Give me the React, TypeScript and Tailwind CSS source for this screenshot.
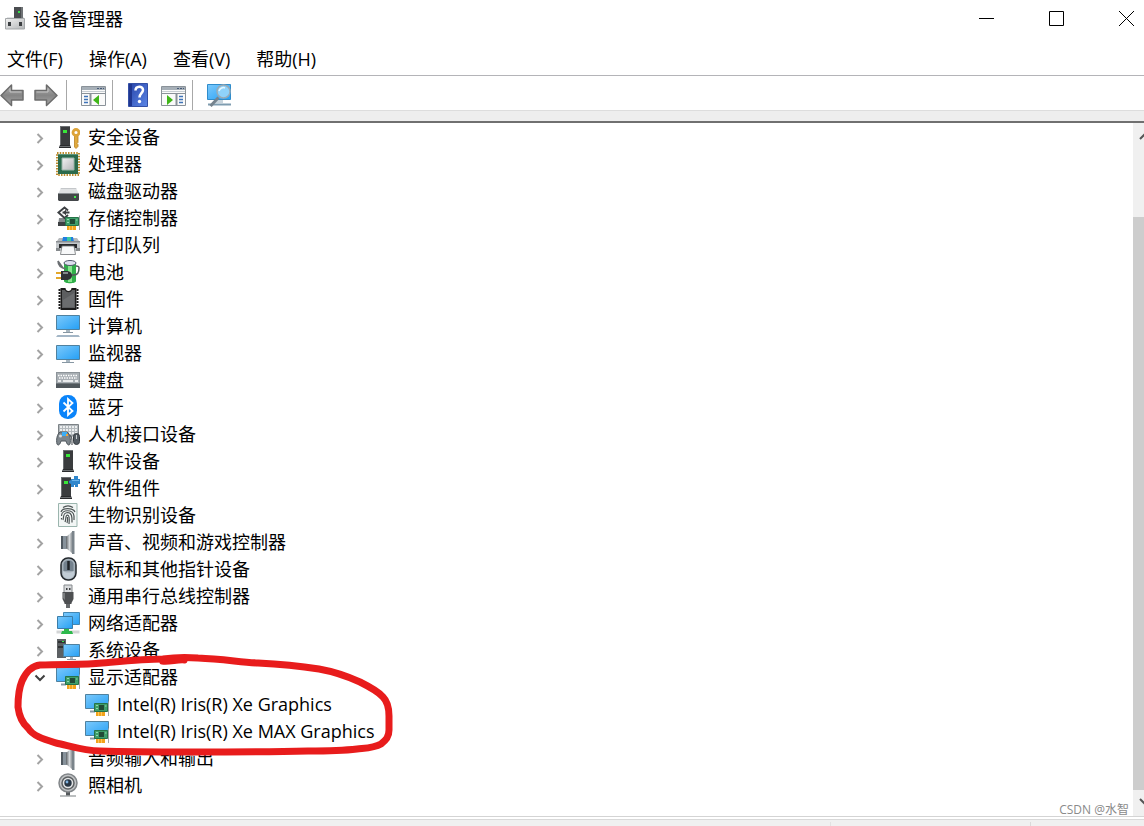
import React, { useState } from "react";

type IconName =
  | "security" | "cpu" | "disk" | "storage" | "printer" | "battery" | "firmware"
  | "computer" | "monitor" | "keyboard" | "bluetooth" | "hid" | "software"
  | "component" | "fingerprint" | "speaker" | "mouse" | "usb" | "network"
  | "system" | "display" | "camera";

type Device = { name: string; icon: IconName; children?: string[] };

const DEVICES: Device[] = [
  { name: "安全设备", icon: "security" },
  { name: "处理器", icon: "cpu" },
  { name: "磁盘驱动器", icon: "disk" },
  { name: "存储控制器", icon: "storage" },
  { name: "打印队列", icon: "printer" },
  { name: "电池", icon: "battery" },
  { name: "固件", icon: "firmware" },
  { name: "计算机", icon: "computer" },
  { name: "监视器", icon: "monitor" },
  { name: "键盘", icon: "keyboard" },
  { name: "蓝牙", icon: "bluetooth" },
  { name: "人机接口设备", icon: "hid" },
  { name: "软件设备", icon: "software" },
  { name: "软件组件", icon: "component" },
  { name: "生物识别设备", icon: "fingerprint" },
  { name: "声音、视频和游戏控制器", icon: "speaker" },
  { name: "鼠标和其他指针设备", icon: "mouse" },
  { name: "通用串行总线控制器", icon: "usb" },
  { name: "网络适配器", icon: "network" },
  { name: "系统设备", icon: "system" },
  {
    name: "显示适配器",
    icon: "display",
    children: ["Intel(R) Iris(R) Xe Graphics", "Intel(R) Iris(R) Xe MAX Graphics"],
  },
  { name: "音频输入和输出", icon: "speaker" },
  { name: "照相机", icon: "camera" },
];

const MENUS = ["文件(F)", "操作(A)", "查看(V)", "帮助(H)"];

export default function App() {
  const [open, setOpen] = useState<string[]>(["显示适配器"]);

  const toggle = (name: string) =>
    setOpen((o) => (o.includes(name) ? o.filter((n) => n !== name) : [...o, name]));

  return (
    <div className="min-h-screen flex flex-col bg-white text-black text-lg font-['Open_Sans','Noto_Sans_CJK_SC',sans-serif]">
      <Gradients />

      {/* Title bar */}
      <header className="h-[37px] flex items-center pl-1 pr-2.5">
        <TitleIcon />
        <h1 className="ml-[5px] flex-1 leading-6">设备管理器</h1>
        <div className="flex items-center gap-[55px]">
          <button aria-label="最小化">
            <svg className="block w-[15px] h-[15px]" viewBox="0 0 15 15">
              <path d="M0 7.5h15" stroke="#000" />
            </svg>
          </button>
          <button aria-label="最大化">
            <svg className="block w-[15px] h-[15px]" viewBox="0 0 15 15">
              <path d="M.5.5h14v14H.5z" fill="none" stroke="#000" />
            </svg>
          </button>
          <button aria-label="关闭">
            <svg className="block w-[15px] h-[15px]" viewBox="0 0 15 15">
              <path d="M0 0l15 15M15 0L0 15" stroke="#000" />
            </svg>
          </button>
        </div>
      </header>

      {/* Menu */}
      <nav className="h-[38px] pt-1.5 flex items-center gap-[26px] pl-[7px]">
        {MENUS.map((m) => (
          <button key={m} className="leading-6">
            {m}
          </button>
        ))}
      </nav>

      {/* Toolbar */}
      <div role="toolbar" className="h-[35px] pt-[3px] flex items-center border-t border-[#b4b4b8]">
        <div className="flex gap-2.5 pr-2">
          <button aria-label="后退"><Arrow /></button>
          <button aria-label="前进"><Arrow flip /></button>
        </div>
        <Separator />
        <div className="pl-3.5 pr-1.5">
          <button aria-label="显示/隐藏控制台树" className="block"><PanelIcon /></button>
        </div>
        <Separator />
        <div className="flex items-center gap-3 pl-3.5 pr-1.5">
          <button aria-label="帮助"><HelpIcon /></button>
          <button aria-label="显示/隐藏操作窗格"><PanelIcon right /></button>
        </div>
        <Separator />
        <div className="pl-3.5">
          <button aria-label="扫描检测硬件改动" className="block"><ScanIcon /></button>
        </div>
      </div>
      <div className="h-[13px] bg-[#eee] border-t border-t-[#ddd] border-b-2 border-b-[#707070]" />

      <main className="flex-1 flex">
        <div className="relative flex-1 pt-px pb-4">
          <ul role="tree">
            {DEVICES.map((d) => {
              const expanded = open.includes(d.name);
              return (
                <li key={d.name} role="treeitem" aria-expanded={expanded}>
                  <button
                    onClick={() => toggle(d.name)}
                    className="h-[27px] flex items-start pl-[34px] text-left"
                  >
                    <Chevron down={expanded && !!d.children} />
                    <DeviceIcon name={d.icon} />
                    <span className="ml-2 leading-[27px]">{d.name}</span>
                  </button>
                  {expanded && d.children && (
                    <ul role="group">
                      {d.children.map((c) => (
                        <li key={c} role="treeitem" className="h-[27px] flex items-start pl-[85px]">
                          <DeviceIcon name={d.icon} />
                          <span className="ml-2 leading-[26px]">{c}</span>
                        </li>
                      ))}
                    </ul>
                  )}
                </li>
              );
            })}
          </ul>

          {/* Hand-drawn highlight over the display adapters */}
          <svg
            className="absolute left-0 top-[523px] w-[400px] h-[120px] pointer-events-none"
            viewBox="0 0 400 120"
            fill="none"
            stroke="#e81c1c"
            strokeLinecap="round"
            strokeLinejoin="round"
          >
            <path
              d="M40 19C65 18 85 19 102 17C125 15 145 13 163 13C176 11 187 11 198 12C222 13 240 16 258 17C280 18 300 20 319 23C336 26 349 31 360 36C370 41 379 46 383 51C388 56 389 62 389 70V84C389 91 386 94 381 98C374 102 366 102 357 103C340 105 325 105 308 105C265 106 225 106 190 106C155 106 130 106 100 105C84 105 70 100 56 97C43 93 33 90 28 82C21 76 19 69 18 61C18 51 19 42 22 35C26 26 31 20 40 19Z"
              strokeWidth="7"
            />
            <path d="M162 16C170 17 178 14 185 15" strokeWidth="5" />
          </svg>

          <span className="absolute bottom-0 right-1 text-xs leading-3 text-[#8a8a8a]">
            CSDN @水智
          </span>
        </div>

        {/* Scrollbar */}
        <div className="w-[11px] flex flex-col bg-[#f0f0f0] overflow-hidden">
          <svg className="block h-[94px] w-4 shrink-0" viewBox="0 0 16 94">
            <path d="M7 16l5-5 4 4" fill="none" stroke="#555" strokeWidth="2" />
          </svg>
          <div className="flex-1 bg-[#cdcdcd]" />
          <svg className="block h-[26px] w-4 shrink-0" viewBox="0 0 16 26">
            <path d="M7 9l5 5 4-4" fill="none" stroke="#555" strokeWidth="2" />
          </svg>
        </div>
      </main>

      {/* Status bar */}
      <footer className="border-t border-[#d4d4d4] pt-0.5">
        <div className="h-[7px] flex justify-end bg-[#f0f0f0] border-t border-[#d9d9d9] pt-0.5">
          <div className="w-[200px] border-l border-[#e2e2e2]" />
          <div className="w-[114px] border-l border-[#dadada]" />
        </div>
      </footer>
    </div>
  );
}

function Separator() {
  return <div className="w-px h-[30px] bg-[#a8a8a8]" />;
}

function Chevron({ down }: { down: boolean }) {
  return (
    <svg className="w-[22px] h-[27px] shrink-0" viewBox="0 0 22 27" fill="none" strokeWidth="2">
      {down ? (
        <path d="M1.500 11.500l4.500 4.500 4.500-4.500" stroke="#404040" />
      ) : (
        <path d="M3.500 10l4.500 4.500-4.500 4.500" stroke="#a3a3a3" />
      )}
    </svg>
  );
}

function Gradients() {
  return (
    <svg className="absolute w-0 h-0" aria-hidden="true">
      <defs>
        <linearGradient id="screen" x1="0" y1="0" x2="1" y2="1">
          <stop offset="0" stopColor="#7cc9fb" />
          <stop offset="1" stopColor="#25a0f5" />
        </linearGradient>
        <linearGradient id="steel" x1="0" y1="0" x2="1" y2="0">
          <stop offset="0" stopColor="#5d6266" />
          <stop offset=".5" stopColor="#d5d9dc" />
          <stop offset="1" stopColor="#71777b" />
        </linearGradient>
        <linearGradient id="silver" x1="0" y1="0" x2="1" y2="1">
          <stop offset="0" stopColor="#f2f2f2" />
          <stop offset="1" stopColor="#b4b6b8" />
        </linearGradient>
        <linearGradient id="arrow" x1="0" y1="0" x2="0" y2="1">
          <stop offset="0" stopColor="#b5b5b5" />
          <stop offset=".5" stopColor="#858585" />
          <stop offset="1" stopColor="#a6a6a6" />
        </linearGradient>
        <linearGradient id="help" x1="0" y1="0" x2="1" y2="1">
          <stop offset="0" stopColor="#2743a8" />
          <stop offset="1" stopColor="#5b86e6" />
        </linearGradient>
      </defs>
    </svg>
  );
}

function TitleIcon() {
  return (
    <svg className="w-6 h-6" viewBox="0 0 24 24">
      <path d="M10 0h9v14h-9z" fill="#4a4d50" />
      <path d="M17 0h2v14h-2z" fill="#6f7376" />
      <path d="M14 4h2v2h-2z" fill="#35e04a" />
      <path d="M3 10h7v4H3zM19 10h1v4h-1z" fill="#e2e4e6" />
      <path d="M1.500 11.500h19V22h-19z" fill="url(#silver)" stroke="#a5a8aa" />
      <path d="M4 15h3v4H4zM15 15h3v4h-3z" fill="#3c3f42" />
    </svg>
  );
}

function Arrow({ flip = false }: { flip?: boolean }) {
  return (
    <svg className="block w-6 h-6" viewBox="0 0 24 24">
      <path
        d={flip ? "M1 7.500h11.500V2L23 12.500 12.500 22.500V17H1z" : "M23 7.500H11.500V2L1 12.500 11.500 22.500V17H23z"}
        fill="url(#arrow)"
        stroke="#6c6c6c"
        strokeWidth="1.500"
        strokeLinejoin="round"
      />
      <path d={flip ? "M2.500 9H14V5.500" : "M21.500 9H10V5.500"} fill="none" stroke="#c4c4c4" />
    </svg>
  );
}

function PanelIcon({ right = false }: { right?: boolean }) {
  return (
    <svg className="block w-[25px] h-6" viewBox="0 0 25 24">
      <path d="M.5 3.500h24v19H.5z" fill="#fafafa" stroke="#8a9299" />
      <path d="M1 4h23v3H1z" fill="#a6afb7" />
      <path d="M16 5h2v1h-2zM19 5h2v1h-2zM22 5h1v1h-1z" fill="#465a78" />
      <path d="M1 8.500h23" stroke="#c8ced3" />
      <path d="M1 10.500h23" stroke="#8a9299" />
      {right ? (
        <>
          <path d="M15.500 11v11" stroke="#8a9299" strokeWidth="2" />
          <path d="M6 12l6 5-6 5z" fill="#3fb618" />
          <path d="M18 13.500h4M18 16.500h4M18 19.500h4" stroke="#3e73b8" strokeWidth="1.500" />
        </>
      ) : (
        <>
          <path d="M9.500 11v11" stroke="#8a9299" strokeWidth="2" />
          <path d="M18 12l-6 5 6 5z" fill="#3fb618" />
          <path d="M3 13.500h4M3 16.500h4M3 19.500h4" stroke="#3e73b8" strokeWidth="1.500" />
        </>
      )}
    </svg>
  );
}

function HelpIcon() {
  return (
    <svg className="block w-[22px] h-6" viewBox="0 0 22 24">
      <path d="M1.500.5h19v23h-19z" fill="url(#help)" stroke="#3450a6" />
      <path d="M2 1h3v22H2z" fill="#1f3690" />
      <path d="M8.500 7.500c0-5 7.500-5 7.500-.5 0 3-3.500 3.500-3.500 7.500" fill="none" stroke="#fff" strokeWidth="2.500" />
      <circle cx="12.500" cy="18.500" r="1.700" fill="#fff" />
    </svg>
  );
}

function ScanIcon() {
  return (
    <svg className="block w-6 h-6" viewBox="0 0 24 24">
      <path d="M.5 1.500h23v15H.5z" fill="url(#screen)" stroke="#2f8ccb" />
      <path d="M8 17h8v3H8z" fill="#c8d4dc" />
      <path d="M1 21.500h23" stroke="#7f9db0" strokeWidth="2" />
      <path d="M11.500 14.500L3.500 23" stroke="#76838d" strokeWidth="3" />
      <circle cx="16.500" cy="8.500" r="6.500" fill="#8fd2fa" stroke="#98aab6" strokeWidth="1.500" />
      <path d="M12 8c1-3 4-4 6-3" fill="none" stroke="#e6f7ff" strokeWidth="1.500" />
    </svg>
  );
}

function Tower({ x = 0 }: { x?: number }) {
  return (
    <g transform={`translate(${x} 0)`}>
      <path d="M1 1h10v19H1z" fill="#3a3c3e" />
      <path d="M1 1h10v1H1zM1 1h1v19H1z" fill="#6c6f72" />
      <path d="M4 5h4v3H4z" fill="#39e639" />
      <path d="M0 22l1-2h10l1 2v1H0z" fill="#2a2b2d" />
      <path d="M0 21.500h12" stroke="#8b8e90" strokeWidth=".7" />
    </g>
  );
}

function Card() {
  return (
    <>
      <path d="M9.500 11.500h13v8h-13z" fill="#3f9e6a" stroke="#267348" />
      <path d="M14 13h5v5h-5z" fill="#214a35" />
      <path d="M11 13.500h2M11 16.500h2M20 14h1.500" stroke="#8fd9ad" />
      <path d="M11 20h9v4h-9z" fill="#f2a31b" />
      <path d="M13.500 20v4M16.500 20v4" stroke="#ffd57a" strokeWidth=".7" />
      <path d="M23.500 9.500V24" stroke="#a3a7a9" />
    </>
  );
}

function DeviceIcon({ name }: { name: IconName }) {
  return (
    <svg className="w-6 h-6 mt-px shrink-0" viewBox="0 0 24 24">
      {ICONS[name]}
    </svg>
  );
}

const ICONS: Record<IconName, React.ReactNode> = {
  security: (
    <>
      <Tower x={3} />
      <path d="M18.500 10v12l1.500 1.500 2-2v-2l-1-1 1-1V10" fill="#e0aa3e" stroke="#b98225" strokeWidth=".8" />
      <circle cx="20" cy="7.500" r="3" fill="#fff" stroke="#dda338" strokeWidth="2.800" />
    </>
  ),
  cpu: (
    <>
      <path d="M1 1h22v22H1z" fill="none" stroke="#b98a2c" strokeWidth="2" strokeDasharray="1.500 1.250" />
      <path d="M2 2h20v20H2z" fill="#2b6a4c" />
      <path d="M2 2h20v1H2z" fill="#5a947a" />
      <path d="M6 6h12v12H6z" fill="url(#silver)" stroke="#9ab5a8" />
    </>
  ),
  disk: (
    <>
      <path d="M5 9h15l3 6H2z" fill="#dfe1e3" />
      <path d="M5 9h15l.5 1h-16z" fill="#c4c7ca" />
      <path d="M2 14.500h21V21l-1 1H3l-1-1z" fill="#44474a" />
      <path d="M2 14.500h21" stroke="#8c9094" />
      <path d="M18 17h2v2h-2z" fill="#42ea4c" />
    </>
  ),
  storage: (
    <>
      <path d="M3 12h8v8H2z" fill="#84888b" />
      <path d="M2 16h8v4H2z" fill="#3d4043" />
      <path d="M12 4.500L8.500 1.500 2.500 6.500 8.500 12l3.500-3M6.500 6.500h7" fill="none" stroke="#3d4043" strokeWidth="2" />
      <path d="M7 6.500l3-3v6z" fill="#3d4043" />
      <Card />
    </>
  ),
  printer: (
    <>
      <path d="M1 8l2-3h18l2 3z" fill="#b6b9bc" />
      <path d="M7 4h10l1 5H6z" fill="#1f7fe0" />
      <path d="M11 4h4v4h-4z" fill="#3cc9a0" />
      <path d="M0 8h24v10H0z" fill="#c3c7ca" />
      <path d="M0 8h24v1.500H0z" fill="#8a8e92" />
      <path d="M3 11h18v4H3z" fill="#26282a" />
      <path d="M0 15h4v3H0zM20 15h4v3h-4z" fill="#85898c" />
      <path d="M6 13h12l1.500 8.500h-15z" fill="#f7f8f9" stroke="#6d7174" strokeWidth=".8" />
    </>
  ),
  battery: (
    <>
      <path d="M8 4c0-4 12-4 12 0v17c0 3-12 3-12 0z" fill="#2fae49" />
      <path d="M12 3h4v19h-4z" fill="#86e48d" />
      <ellipse cx="14" cy="3" rx="6" ry="2.500" fill="#dedfef" stroke="#50566a" />
      <path d="M0 13h6M0 18h6" stroke="#e3a72b" strokeWidth="2" />
      <path d="M5 11h5c4 0 6 2 6 4.500S14 20 10 20H5z" fill="#303235" />
      <path d="M7 13h5" stroke="#a3a7aa" strokeWidth="1.500" />
      <path d="M16 15h2c4 0 5-3 5-7 0-2-1-2-3-2" fill="none" stroke="#55595d" strokeWidth="1.500" />
      <path d="M2 1c0 5 3 7 8 8M2 1l5 7" fill="none" stroke="#6a6e72" strokeWidth="1.500" />
    </>
  ),
  firmware: (
    <>
      <path d="M3.500 2v21M21.500 2v21" stroke="#1c1c1c" strokeWidth="2" strokeDasharray="2 1" />
      <path d="M4.500 1h5c0 4 6 4 6 0h5v22h-16z" fill="#1c1c1c" />
      <path d="M6 3h3c1 3 6 3 7 0h3v18H6z" fill="#5c5e60" />
      <path d="M7 13l11-7v14H7z" fill="#6b6d6f" />
    </>
  ),
  computer: (
    <>
      <path d="M.5 1.500h23v14H.5z" fill="url(#screen)" stroke="#4f819f" />
      <path d="M10 16h4v2h-4z" fill="#a9b7c1" />
      <path d="M7 18.500h10" stroke="#8797a3" />
      <path d="M1.500 21h21l1.500 2H0z" fill="#a3b6c6" />
    </>
  ),
  monitor: (
    <>
      <path d="M.5 4.500h23v14H.5z" fill="url(#screen)" stroke="#4f819f" />
      <path d="M10 19h4v2h-4z" fill="#a9b7c1" />
      <path d="M6 21.500h12" stroke="#8797a3" />
    </>
  ),
  keyboard: (
    <>
      <path d="M0 4h24v15H0z" fill="#8d9499" />
      <path d="M1 5h22v10H1z" fill="#a9afb4" />
      <path d="M2 7.500h20M3 10h18" stroke="#fff" strokeWidth="1.500" strokeDasharray="1.500 1" />
      <path d="M2 13h3M7 13h10M19 13h3" stroke="#fff" strokeWidth="1.500" />
      <path d="M0 15.500h24V20H0z" fill="#4f565b" />
    </>
  ),
  bluetooth: (
    <>
      <rect x="3" y="0" width="18" height="24" rx="8.500" fill="#0a84fa" />
      <path d="M7.500 7.500l9 8.500-4.500 4V4l4.500 4-9 8.500" fill="none" stroke="#fff" strokeWidth="1.800" />
    </>
  ),
  hid: (
    <>
      <path d="M2.500 2.500h20V14h-20z" fill="#b3b9bd" stroke="#7c8286" />
      <path d="M4 5h17M4 8h17M4 11h17" stroke="#fff" strokeWidth="1.500" strokeDasharray="2 1" />
      <path d="M4 10c-3 2-4 8-3 12 1 2 3 1 4-3h5c1 4 3 5 4 3 1-5 0-10-3-12z" fill="#7e868c" stroke="#4e565c" />
      <circle cx="4.500" cy="14" r="1.500" fill="#d6dce0" />
      <path d="M6 10h5v4H6z" fill="#3caef5" />
      <path d="M10 12h2v2h-2z" fill="#f0a43a" />
      <rect x="17.500" y="11.500" width="6" height="11" rx="3" fill="#535b62" stroke="#343a3f" />
      <path d="M14 14c2-1 2 4 2 9" fill="none" stroke="#343a3f" />
      <path d="M20.500 13v4" stroke="#c8cdd1" />
    </>
  ),
  software: <Tower x={6} />,
  component: (
    <>
      <Tower x={4} />
      <path d="M15 3h3V0h4v3h2v5h-2v3h-3V9h-1v2h-3V8l-2-1V5l2-1z" fill="#2f86cc" />
      <path d="M16 4h7v1h-7z" fill="#6bb4ea" />
    </>
  ),
  fingerprint: (
    <>
      <path d="M2.500.5h18.500v23H2.500z" fill="#f2f6f5" stroke="#9bb5ae" />
      <g fill="none" stroke="#4c5354" strokeWidth="1.200">
        <path d="M7 4.500c3-2 7-2 10 0M5 9c1-4.500 12-4.500 14 0M5.500 13c0-7 12-7 12.500 0v4" />
        <path d="M7 17c1-3-.5-7 4.500-7.500 5 0 4.500 6 4.500 10" />
        <path d="M9 19c1.500-3 0-7 2.500-7 2.500.5 2 5 1.500 9M11 20c.8-2 .8-4 .5-6M5.500 15v1.500" />
      </g>
    </>
  ),
  speaker: (
    <>
      <path d="M5 6h6v13H5z" fill="#87929b" />
      <path d="M5 6h2v13H5z" fill="#4f585f" />
      <path d="M10 7l7-6v23l-7-6z" fill="url(#steel)" />
      <path d="M16 1h2.500v23H16z" fill="#7b848b" />
    </>
  ),
  mouse: (
    <>
      <rect x="5" y="1" width="15" height="22" rx="7" fill="#a5b0b9" stroke="#23282d" strokeWidth="1.500" />
      <path d="M7.500 7c1-5 9-5 10 0v7h-10z" fill="#73818d" />
      <path d="M7 14c3 2 8 2 11 0v4c-2 5-9 5-11 0z" fill="#c1ccd5" />
      <path d="M12.500 4v9" stroke="#202428" strokeWidth="2.500" />
    </>
  ),
  usb: (
    <>
      <path d="M8 1h8v8H8z" fill="#d9dbdd" stroke="#85898c" />
      <path d="M10 4h1.500v2H10zM13 4h1.500v2H13z" fill="#3c3e40" />
      <path d="M6.500 8h11v7l-2 4v1h-7v-1l-2-4z" fill="#4d4f51" />
      <path d="M7 9h2v7l-2-2z" fill="#7b7e80" />
      <path d="M10 20h4v4h-4z" fill="#66696b" />
    </>
  ),
  network: (
    <>
      <path d="M7.500 1.500h16v12h-16z" fill="url(#screen)" stroke="#4388b4" />
      <path d="M1.500 5.500h15v12h-15z" fill="url(#screen)" stroke="#3b7da8" />
      <path d="M.5 21h23" stroke="#d3d5d6" strokeWidth="3" />
      <path d="M8 18h5v2h3l1 3H5l1-3h2z" fill="#2eb94c" />
    </>
  ),
  system: (
    <>
      <path d="M1 1h9v19H1z" fill="#5c6063" />
      <path d="M2 3h7v2H2zM2 8h7v2H2z" fill="#303234" />
      <path d="M6 3h2v1H6z" fill="#36e04a" />
      <path d="M7.500 6.500h16v12h-16z" fill="url(#screen)" stroke="#4f819f" />
      <path d="M14 19h3v2h-3z" fill="#a9b7c1" />
      <path d="M11 21.500h9" stroke="#8797a3" />
    </>
  ),
  display: (
    <>
      <path d="M.5 2.500h23v14H.5z" fill="url(#screen)" stroke="#4f819f" />
      <path d="M5 19.500h5" stroke="#8797a3" strokeWidth="2" />
      <Card />
    </>
  ),
  camera: (
    <>
      <path d="M10 19h4v4h-4z" fill="#55595c" />
      <path d="M4 23h16" stroke="#a5a8aa" strokeWidth="1.500" />
      <circle cx="12" cy="10" r="9" fill="#c2c4c6" stroke="#828689" strokeWidth="1.500" />
      <circle cx="12" cy="10" r="6" fill="#e3e4e5" stroke="#5d6163" strokeWidth="1.500" />
      <circle cx="12" cy="10" r="3.700" fill="#273543" />
      <circle cx="11" cy="9" r="1.400" fill="#7eb1de" />
    </>
  ),
};
